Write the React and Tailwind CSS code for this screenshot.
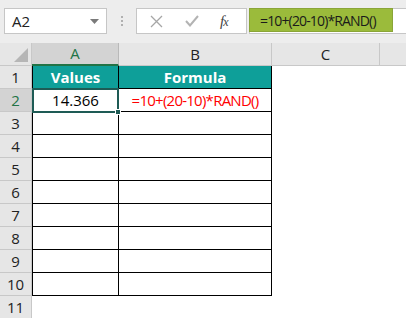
import React from 'react';

const rows = [1, 2, 3, 4, 5, 6, 7, 8, 9, 10];

const FormulaBar = () => (
    <div className="h-[43px] bg-[#ededed] pt-[8px] flex items-start">
        <div className="ml-[4px] w-[103px] h-[26px] bg-white border border-[#c6c6c6] flex items-center justify-between pl-[7px] pr-[7px]">
            <span className="text-[15px] text-[#222]">A2</span>
            <svg width="9" height="5" viewBox="0 0 9 5"><path d="M0 0 L9 0 L4.5 5 Z" fill="#7a7a7a" /></svg>
        </div>
        <div className="w-[29px] h-[26px] flex flex-col items-center justify-center gap-[2px]">
            <span className="w-[2px] h-[2px] bg-[#b0b0b0]" />
            <span className="w-[2px] h-[2px] bg-[#b0b0b0]" />
            <span className="w-[2px] h-[2px] bg-[#b0b0b0]" />
        </div>
        <div className="w-[111px] h-[26px] bg-white border border-[#c6c6c6] flex items-center">
            <svg className="ml-[13px]" width="13" height="13" viewBox="0 0 13 13">
                <path d="M1 1 L12 12 M12 1 L1 12" stroke="#a6a6a6" strokeWidth="1.3" />
            </svg>
            <svg className="ml-[22px]" width="14" height="12" viewBox="0 0 14 12">
                <path d="M1 6 L5 10.5 L13 1" stroke="#b3b3b3" strokeWidth="2" fill="none" />
            </svg>
            <span className="ml-[21px] text-[15px] italic text-[#444] leading-none tracking-[-1px]" style={{ fontFamily: '"Liberation Serif", serif' }}>
                f<span className="text-[12px]">x</span>
            </span>
        </div>
        <div className="ml-[2px] flex-1 h-[26px] bg-white border-y border-l border-[#c6c6c6] flex">
            <div className="w-[144px] h-full bg-[#9bbb3b] border border-[#8aa537] -my-px -ml-px flex items-center pl-[10px] pt-[1px]">
                <span className="text-[14px] text-[#1a1a1a] tracking-[-0.85px]">=10+(20-10)*RAND()</span>
            </div>
        </div>
    </div>
);

const App = () => {
    return (
        <div className="w-[406px] h-[318px] overflow-hidden bg-white" style={{ fontFamily: '"Open Sans", "Noto Sans", sans-serif' }}>
            <FormulaBar />
            <div className="grid grid-cols-[32px_87px_153px_108px_1fr] grid-rows-[23px] auto-rows-[23px]">
                {/* header row */}
                <div className="bg-[#e6e6e6] border-r border-b border-[#c8c8c8] relative">
                    <svg className="absolute right-[3px] bottom-[3px]" width="14" height="14" viewBox="0 0 14 14">
                        <path d="M14 0 L14 14 L0 14 Z" fill="#b6b6b6" />
                    </svg>
                </div>
                <div className="bg-[#d3d3d3] border-r border-[#b9b9b9] border-b-2 border-b-[#217346] flex items-center justify-center text-[15px] text-[#217346]">A</div>
                <div className="bg-[#e6e6e6] border-r border-b border-[#c8c8c8] flex items-center justify-center text-[15px] text-[#222]">B</div>
                <div className="bg-[#e6e6e6] border-r border-b border-[#c8c8c8] flex items-center justify-center text-[15px] text-[#222]">C</div>
                <div className="bg-[#e6e6e6] border-b border-[#c8c8c8]" />

                {rows.map((r) => (
                    <React.Fragment key={r}>
                        <div className={`border-r border-b border-[#c8c8c8] flex items-center justify-center text-[15px] ${r === 2 ? 'bg-[#d3d3d3] text-[#217346]' : 'bg-[#e6e6e6] text-[#222]'}`}>
                            {r}
                        </div>
                        {r === 1 ? (
                            <>
                                <div className="bg-[#0e9f99] border-l border-r border-b border-black flex items-center justify-center text-[15px] font-bold text-white">Values</div>
                                <div className="bg-[#0e9f99] border-r border-b border-black flex items-center justify-center text-[15px] font-bold text-white">Formula</div>
                            </>
                        ) : r === 2 ? (
                            <>
                                <div className="relative border-l border-r border-b border-black flex items-center justify-center text-[15px] text-black">
                                    14.366
                                    <div className="absolute -left-[1px] -top-[1px] -right-[1px] -bottom-[2px] border-2 border-[#1e5b55]" />
                                    <div className="absolute -right-[3px] -bottom-[4px] w-[6px] h-[6px] bg-[#1e5b55] border border-white" />
                                </div>
                                <div className="border-r border-b border-black flex items-center justify-center text-[15px] text-[#ff0000] tracking-[-0.75px]">=10+(20-10)*RAND()</div>
                            </>
                        ) : (
                            <>
                                <div className="border-l border-r border-b border-black" />
                                <div className="border-r border-b border-black" />
                            </>
                        )}
                        <div />
                        <div />
                    </React.Fragment>
                ))}
                <div className="bg-[#e6e6e6] border-r border-[#c8c8c8] flex items-center justify-center text-[15px] text-[#222]">11</div>
                <div />
                <div />
                <div />
                <div />
            </div>
        </div>
    );
};

export default App;
